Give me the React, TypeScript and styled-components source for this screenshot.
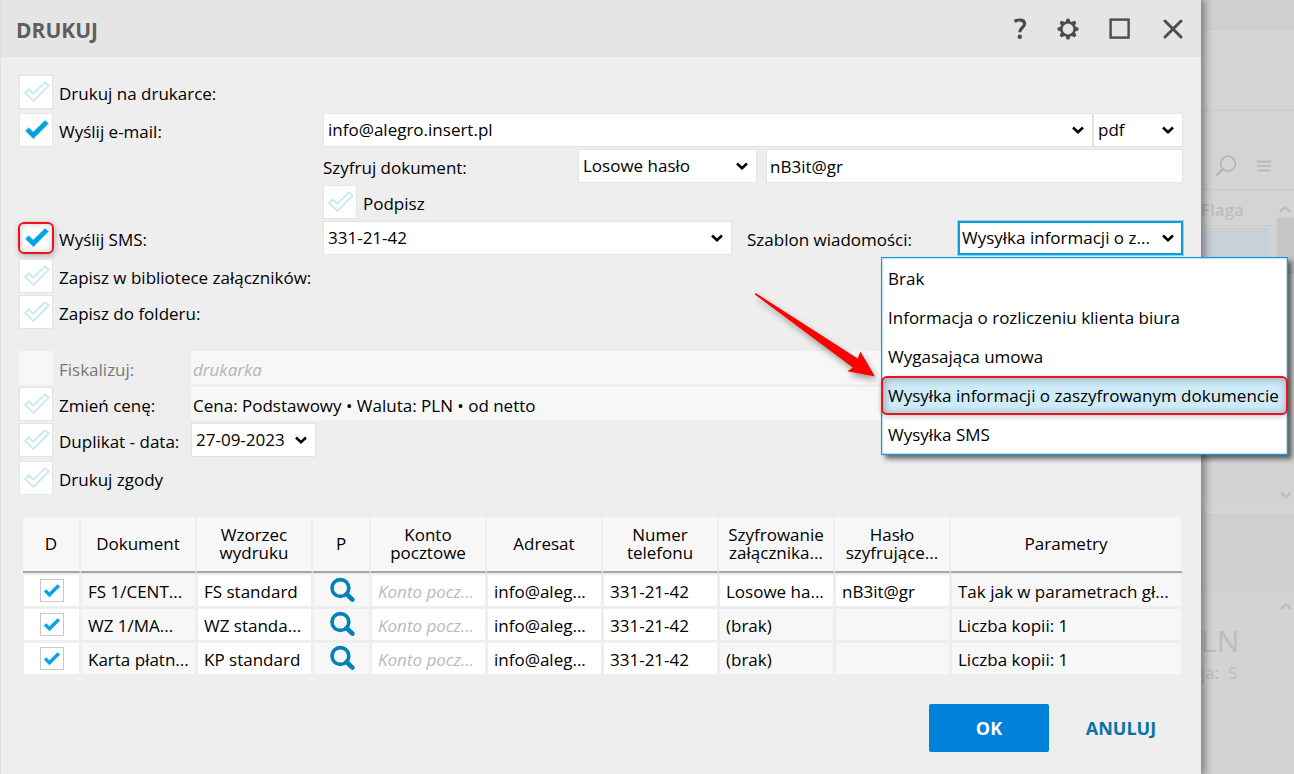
import React from "react";
import styled, { createGlobalStyle, css } from "styled-components";

const Global = createGlobalStyle`
  * { box-sizing: border-box; }
  body { margin: 0; background: #d3d3d3; font-family: "Open Sans", "Noto Sans", sans-serif; font-size: 17px; line-height: 24px; color: #000; }
  button, input, select { font: inherit; color: inherit; }
`;

const Page = styled.div`
  display: flex;
  min-height: 100vh;
  overflow: hidden;
`;

const Dialog = styled.main`
  flex: 1;
  min-width: 0;
  position: relative;
  z-index: 1;
  display: flex;
  flex-direction: column;
  background: #eeeeee;
  border-left: 1px solid #e0e0e0;
  box-shadow: 2px 0 8px 2px rgba(0, 0, 0, 0.4);
`;

const TitleBar = styled.header`
  height: 57px;
  padding: 0 16px 0 15px;
  display: flex;
  align-items: center;
  justify-content: space-between;
  background: #e5e5e5;
  color: #4d4d4d;
`;

const Title = styled.h1`
  margin: 0;
  padding-top: 3px;
  font-size: 21px;
  line-height: 24px;
  font-weight: 700;
  color: #5e5e5e;
`;

const WindowActions = styled.div`
  display: flex;
  gap: 30px;
`;

const IconButton = styled.button`
  height: 28px;
  padding: 0;
  border: 0;
  background: none;
  display: flex;
  align-items: center;
  justify-content: center;
`;

const Form = styled.form`
  padding: 18px 18px 20px;
  display: flex;
  flex-direction: column;
`;

const Group = styled.div<{ $top?: number }>`
  display: flex;
  flex-direction: column;
  gap: 2px;
  margin-top: ${(p) => p.$top ?? 0}px;
`;

const Row = styled.div<{ $label?: number }>`
  display: grid;
  grid-template-columns: ${(p) => p.$label ?? 304}px minmax(0, 1fr);
  height: 34px;
`;

const Fields = styled.div`
  grid-column: 2;
  display: flex;
  align-items: center;
`;

const PasswordFields = styled.div`
  flex: 1;
  min-width: 0;
  display: flex;
  align-items: center;
  gap: 9px;
`;

const CheckLabel = styled.label<{ $disabled?: boolean }>`
  display: flex;
  align-items: center;
  gap: 6px;
  white-space: nowrap;
  color: ${(p) => (p.$disabled ? "#777" : "inherit")};
`;

const CheckBox = styled.span<{ $small?: boolean; $marked?: boolean; $disabled?: boolean }>`
  position: relative;
  flex: none;
  display: flex;
  width: ${(p) => (p.$small ? 24 : 34)}px;
  height: ${(p) => (p.$small ? 23 : 34)}px;
  border: ${(p) => (p.$small ? "1px solid #c8c8c8" : "1px solid #e4e4e4")};
  background: ${(p) => (p.$disabled ? "#f7f7f7" : "#fff")};
  ${(p) =>
    p.$disabled &&
    css`
      border-color: #f7f7f7;
    `}
  ${(p) =>
    p.$marked &&
    css`
      &::after {
        content: "";
        position: absolute;
        inset: 0 -2px;
        border: 2px solid #f2101a;
        border-radius: 6px;
        box-shadow: 1px 2px 6px rgba(0, 0, 0, 0.25), inset 0 0 7px rgba(0, 0, 0, 0.2);
        pointer-events: none;
      }
    `}
  input {
    appearance: none;
    position: absolute;
    inset: 0;
    margin: 0;
  }
  svg {
    margin: auto 2px auto auto;
  }
`;

const Text = styled.span<{ $width?: number }>`
  flex: none;
  width: ${(p) => (p.$width ? p.$width + "px" : "auto")};
  padding-top: 3px;
  white-space: nowrap;
`;

const TemplateLabel = styled(Text)`
  width: 226px;
  padding-left: 15px;
`;

const SelectBox = styled.div<{ $width?: number; $focused?: boolean }>`
  position: relative;
  flex: ${(p) => (p.$width ? `0 0 ${p.$width}px` : "1")};
  height: 34px;
  select {
    appearance: none;
    width: 100%;
    height: 100%;
    padding: 0 28px 0 4px;
    border: 1px solid #e4e4e4;
    border-radius: 0;
    background: #fff;
    text-overflow: ellipsis;
    outline: 0;
    ${(p) =>
      p.$focused &&
      css`
        border: 2px solid #0d9ddb;
        box-shadow: 0 0 0 1px #8fd3f0;
        padding-left: 2px;
      `}
  }
  > svg {
    position: absolute;
    right: 8px;
    top: 13px;
    pointer-events: none;
  }
`;

const TextInput = styled.input`
  flex: 1;
  min-width: 0;
  height: 34px;
  padding: 0 3px;
  border: 1px solid #e4e4e4;
  background: #fff;
`;

const FlatInput = styled.input`
  flex: 1;
  min-width: 0;
  height: 34px;
  padding: 4px 2px 0;
  border: 0;
  border-bottom: 1px solid #f0f0f0;
  background: #f7f7f7;
  &::placeholder {
    color: #b4b4b4;
    font-style: italic;
    opacity: 1;
  }
`;

const OptionList = styled.ul`
  position: absolute;
  z-index: 3;
  top: 36px;
  right: -105px;
  width: 407px;
  margin: 0;
  padding: 1px 0 0;
  list-style: none;
  background: #fff;
  border: 1px solid #0d9ddb;
  box-shadow: inset 0 0 0 1px #b9e5f7, 4px 4px 5px rgba(0, 0, 0, 0.55);
`;

const Option = styled.li<{ $selected?: boolean }>`
  height: 39px;
  padding: 8px 6px 0;
  line-height: 24px;
  white-space: nowrap;
  border-radius: 6px;
  ${(p) =>
    p.$selected &&
    css`
      background: #cdebf8;
      margin: 0 -1px;
      padding: 6px 5px 0;
      border: 2px solid #f2101a;
      box-shadow: 0 2px 5px rgba(0, 0, 0, 0.2), inset 1px 1px 8px rgba(0, 0, 0, 0.3);
    `}
`;

const Pointer = styled.svg`
  position: absolute;
  left: -131px;
  top: 32px;
  overflow: visible;
  pointer-events: none;
  filter: drop-shadow(2px 4px 3px rgba(0, 0, 0, 0.35));
`;

const Table = styled.table`
  width: calc(100% - 4px);
  margin: 22px 0 0 4px;
  table-layout: fixed;
  border-collapse: separate;
  border-spacing: 0;
`;

const HeadCell = styled.th`
  height: 56px;
  padding: 0 2px;
  font-weight: 400;
  line-height: 18px;
  white-space: pre-line;
  text-align: center;
  background: #f7f7f7;
  background-clip: padding-box;
  border-right: 2px solid #eeeeee;
  border-bottom: 2px solid #a6a6a6;
`;

const Cell = styled.td<{ $shade?: boolean; $center?: boolean; $muted?: boolean }>`
  height: 34px;
  padding: ${(p) => (p.$center ? "0" : "2px 0 0 6px")};
  line-height: 24px;
  overflow: hidden;
  white-space: nowrap;
  background: ${(p) => (p.$shade ? "#f7f7f7" : "#fff")};
  border: solid #eeeeee;
  border-width: 2px 2px 1px 1px;
  color: ${(p) => (p.$muted ? "#b9b9b9" : "inherit")};
  font-style: ${(p) => (p.$muted ? "italic" : "normal")};
  > * {
    margin: 0 auto;
  }
`;

const Footer = styled.footer`
  display: flex;
  justify-content: flex-end;
  padding: 9px 8px 22px;
`;

const ActionButton = styled.button<{ $primary?: boolean }>`
  width: ${(p) => (p.$primary ? 120 : 144)}px;
  height: 48px;
  padding: 0;
  border: 0;
  border-radius: 2px;
  font-size: 18px;
  font-weight: 700;
  background: ${(p) => (p.$primary ? "#0082d8" : "transparent")};
  color: ${(p) => (p.$primary ? "#fff" : "#0a74a8")};
`;

const Backdrop = styled.aside`
  flex: 0 0 93px;
  display: flex;
  flex-direction: column;
  color: #bdbdbd;
`;

const Band = styled.div<{ $h: number; $tone?: string }>`
  flex: 0 0 ${(p) => p.$h}px;
  display: flex;
  align-items: center;
  background: ${(p) => p.$tone ?? "#d4d4d4"};
  border-bottom: 1px solid #cbcbcb;
`;

const Tools = styled(Band)`
  padding: 32px 0 0 14px;
  gap: 20px;
`;

const ListHead = styled(Band)`
  justify-content: space-between;
  padding: 4px 1px 0 0;
  font-weight: 600;
`;

const ListBody = styled.div`
  flex: 0 0 265px;
  display: flex;
  justify-content: space-between;
`;

const Highlight = styled.div`
  width: 68px;
  height: 34px;
  margin-top: 2px;
  background: #c8d0d8;
`;

const Track = styled.div`
  width: 17px;
  height: 56px;
  margin-top: -8px;
  background: #c6c6c6;
`;

const Summary = styled.div`
  display: flex;
  flex-direction: column;
  padding-top: 10px;
  strong {
    font-size: 30px;
    line-height: 40px;
    font-weight: 400;
  }
  span {
    white-space: pre;
  }
`;

const ArrowLine = styled.div<{ $top?: number }>`
  display: flex;
  justify-content: flex-end;
  padding: ${(p) => p.$top ?? 0}px 1px 0 0;
  svg {
    flex: none;
  }
`;

function Chevron({ up, faint }: { up?: boolean; faint?: boolean }) {
  return (
    <svg width="14" height="9" viewBox="0 0 14 9" aria-hidden="true">
      <path
        d={up ? "M1.6 7 L7 2.5 L12.4 7" : "M2 1.5 L7 6.2 L12 1.5"}
        fill="none"
        stroke={faint ? "#c0c0c0" : "#000"}
        strokeWidth="2.5"
      />
    </svg>
  );
}

function Tick({ on, small }: { on?: boolean; small?: boolean }) {
  return (
    <svg width={small ? 18 : 26} height={small ? 16 : 22} viewBox="0 0 26 22" aria-hidden="true">
      <path
        d="M1.2 11.8 L4.8 8.4 L9.2 12.8 L21 1.2 L24.8 4.6 L9.4 20 Z"
        fill={on ? "#00a5e0" : "none"}
        stroke={on ? "#a6def3" : "#bce6f5"}
        strokeWidth={on ? 0.6 : 1.5}
      />
    </svg>
  );
}

type CheckProps = {
  label: string;
  checked?: boolean;
  disabled?: boolean;
  marked?: boolean;
};

function Check({ label, checked, disabled, marked }: CheckProps) {
  return (
    <CheckLabel $disabled={disabled}>
      <CheckBox $disabled={disabled} $marked={marked}>
        <input type="checkbox" defaultChecked={checked} disabled={disabled} />
        {!disabled && <Tick on={checked} />}
      </CheckBox>
      <Text>{label}</Text>
    </CheckLabel>
  );
}

type SelectProps = {
  label: string;
  value: string;
  width?: number;
  focused?: boolean;
  children?: React.ReactNode;
};

function Select({ label, value, width, focused, children }: SelectProps) {
  return (
    <SelectBox $width={width} $focused={focused}>
      <select aria-label={label} defaultValue={value}>
        <option>{value}</option>
      </select>
      <Chevron />
      {children}
    </SelectBox>
  );
}

function Lens() {
  return (
    <svg width="26" height="30" viewBox="0 0 26 30" aria-hidden="true" display="block">
      <circle cx="11.4" cy="12" r="8.4" fill="none" stroke="#0082b8" strokeWidth="3.6" />
      <path d="M17.6 18 L23.4 23.6" stroke="#0082b8" strokeWidth="4.6" strokeLinecap="round" />
    </svg>
  );
}

const gearTeeth = Array.from({ length: 8 }, (_, i) => i * 45);

const templates = [
  "Brak",
  "Informacja o rozliczeniu klienta biura",
  "Wygasająca umowa",
  "Wysyłka informacji o zaszyfrowanym dokumencie",
  "Wysyłka SMS",
];
const chosenTemplate = 3;

const columns = [
  { title: "D", width: "5%" },
  { title: "Dokument", width: "10%" },
  { title: "Wzorzec\nwydruku", width: "10%" },
  { title: "P", width: "5%" },
  { title: "Konto\npocztowe", width: "10%" },
  { title: "Adresat", width: "10%" },
  { title: "Numer\ntelefonu", width: "10%" },
  { title: "Szyfrowanie\nzałącznika...", width: "10%" },
  { title: "Hasło\nszyfrujące...", width: "10%" },
  { title: "Parametry", width: "20%" },
];

const documents = [
  { doc: "FS 1/CENT...", pattern: "FS standard", crypt: "Losowe ha...", pass: "nB3it@gr", params: "Tak jak w parametrach gł..." },
  { doc: "WZ 1/MA...", pattern: "WZ standa...", crypt: "(brak)", pass: "", params: "Liczba kopii: 1" },
  { doc: "Karta płatn...", pattern: "KP standard", crypt: "(brak)", pass: "", params: "Liczba kopii: 1" },
];

export default function App() {
  return (
    <>
      <Global />
      <Page>
        <Dialog>
          <TitleBar>
            <Title>DRUKUJ</Title>
            <WindowActions>
              <IconButton aria-label="Pomoc">
                <svg width="14" height="22" viewBox="0 0 14 22">
                  <path d="M1.6 3.6 C4.6 1.4 11.6 1 11.6 5.8 C11.6 9.6 6.8 9.4 6.8 14.2" fill="none" stroke="currentColor" strokeWidth="3.2" />
                  <circle cx="6.8" cy="18.8" r="2.2" fill="currentColor" />
                </svg>
              </IconButton>
              <IconButton aria-label="Ustawienia">
                <svg width="22" height="22" viewBox="-11 -11 22 22">
                  <circle r="6.4" fill="none" stroke="currentColor" strokeWidth="2" />
                  {gearTeeth.map((a) => (
                    <path key={a} d="M-3 -6.6 L-1.1 -10.6 H1.1 L3 -6.6 Z" fill="currentColor" transform={`rotate(${a})`} />
                  ))}
                </svg>
              </IconButton>
              <IconButton aria-label="Maksymalizuj">
                <svg width="22" height="22" viewBox="0 0 22 22">
                  <rect x="1.6" y="1.6" width="18" height="18" fill="none" stroke="currentColor" strokeWidth="2.4" />
                </svg>
              </IconButton>
              <IconButton aria-label="Zamknij">
                <svg width="24" height="20" viewBox="0 0 24 20">
                  <path d="M4 2 L20 18 M20 2 L4 18" stroke="currentColor" strokeWidth="3" strokeLinecap="round" />
                </svg>
              </IconButton>
            </WindowActions>
          </TitleBar>

          <Form>
            <Group>
              <Row>
                <Check label="Drukuj na drukarce:" />
              </Row>
            </Group>
            <Group $top={4}>
              <Row>
                <Check label="Wyślij e-mail:" checked />
                <Fields>
                  <Select label="Adres e-mail" value="info@alegro.insert.pl" />
                  <Select label="Format" value="pdf" width={90} />
                </Fields>
              </Row>
              <Row>
                <Fields>
                  <Text $width={255}>Szyfruj dokument:</Text>
                  <PasswordFields>
                    <Select label="Szyfruj dokument" value="Losowe hasło" width={179} />
                    <TextInput aria-label="Hasło" defaultValue="nB3it@gr" />
                  </PasswordFields>
                </Fields>
              </Row>
              <Row>
                <Fields>
                  <Check label="Podpisz" />
                </Fields>
              </Row>
              <Row>
                <Check label="Wyślij SMS:" checked marked />
                <Fields>
                  <Select label="Numer telefonu" value="331-21-42" />
                  <TemplateLabel>Szablon wiadomości:</TemplateLabel>
                  <Select label="Szablon wiadomości" value="Wysyłka informacji o z..." width={225} focused>
                    <OptionList role="listbox" aria-label="Szablony">
                      {templates.map((t, i) => (
                        <Option key={t} role="option" aria-selected={i === chosenTemplate} $selected={i === chosenTemplate}>
                          {t}
                        </Option>
                      ))}
                      <Pointer width="130" height="90" viewBox="0 0 130 90" aria-hidden="true">
                        <path d="M4.6 3 L106.7 68.5 L109.4 61.6 L124 86.4 L96.4 81.2 L101.8 77.4 L3.8 4.4 Z" fill="#ff0000" />
                      </Pointer>
                    </OptionList>
                  </Select>
                </Fields>
              </Row>
            </Group>
            <Group $top={4}>
              <Row>
                <Check label="Zapisz w bibliotece załączników:" />
              </Row>
              <Row>
                <Check label="Zapisz do folderu:" />
              </Row>
            </Group>
            <Group $top={22}>
              <Row $label={172}>
                <Check label="Fiskalizuj:" disabled />
                <Fields>
                  <FlatInput aria-label="Drukarka" placeholder="drukarka" disabled />
                </Fields>
              </Row>
              <Row $label={172}>
                <Check label="Zmień cenę:" />
                <Fields>
                  <FlatInput aria-label="Cena" defaultValue="Cena: Podstawowy • Waluta: PLN • od netto" readOnly />
                </Fields>
              </Row>
              <Row $label={172}>
                <Check label="Duplikat - data:" />
                <Fields>
                  <Select label="Data duplikatu" value="27-09-2023" width={125} />
                </Fields>
              </Row>
            </Group>
            <Group $top={4}>
              <Row>
                <Check label="Drukuj zgody" />
              </Row>
            </Group>

            <Table>
              <colgroup>
                {columns.map((c) => (
                  <col key={c.title} width={c.width} />
                ))}
              </colgroup>
              <thead>
                <tr>
                  {columns.map((c) => (
                    <HeadCell key={c.title} scope="col">
                      {c.title}
                    </HeadCell>
                  ))}
                </tr>
              </thead>
              <tbody>
                {documents.map((d) => (
                  <tr key={d.doc}>
                    <Cell $center>
                      <CheckBox $small>
                        <input type="checkbox" defaultChecked aria-label={d.doc} />
                        <Tick on small />
                      </CheckBox>
                    </Cell>
                    <Cell $shade>{d.doc}</Cell>
                    <Cell>{d.pattern}</Cell>
                    <Cell $shade $center>
                      <Lens />
                    </Cell>
                    <Cell $muted>Konto pocz...</Cell>
                    <Cell>info@aleg...</Cell>
                    <Cell>331-21-42</Cell>
                    <Cell $shade={!d.pass}>{d.crypt}</Cell>
                    <Cell $shade={!d.pass}>{d.pass}</Cell>
                    <Cell $shade>{d.params}</Cell>
                  </tr>
                ))}
              </tbody>
            </Table>
          </Form>

          <Footer>
            <ActionButton $primary>OK</ActionButton>
            <ActionButton>ANULUJ</ActionButton>
          </Footer>
        </Dialog>

        <Backdrop>
          <Band $h={30} $tone="#d0d0d0" />
          <Band $h={81} />
          <Tools $h={79}>
            <svg width="22" height="22" viewBox="0 0 22 22" fill="none" stroke="#b4b4b4" strokeWidth="1.6">
              <circle cx="13" cy="8.6" r="7.4" />
              <path d="M8 14 L1.4 20.4" strokeWidth="2.4" />
            </svg>
            <svg width="14" height="12" viewBox="0 0 14 12" stroke="#b4b4b4" strokeWidth="1.4">
              <path d="M0 1.5 H14 M0 6 H14 M0 10.5 H14" />
            </svg>
          </Tools>
          <ListHead $h={36}>
            <span>Flaga</span>
            <ArrowLine>
              <Chevron up faint />
            </ArrowLine>
          </ListHead>
          <ListBody>
            <Highlight />
            <Track />
          </ListBody>
          <ArrowLine>
            <Chevron faint />
          </ArrowLine>
          <Band $h={15} />
          <Band $h={76} $tone="#d0d0d0" />
          <ArrowLine $top={11}>
            <Chevron up faint />
          </ArrowLine>
          <Summary>
            <strong>LN</strong>
            <span>{"ja:  S"}</span>
          </Summary>
        </Backdrop>
      </Page>
    </>
  );
}
